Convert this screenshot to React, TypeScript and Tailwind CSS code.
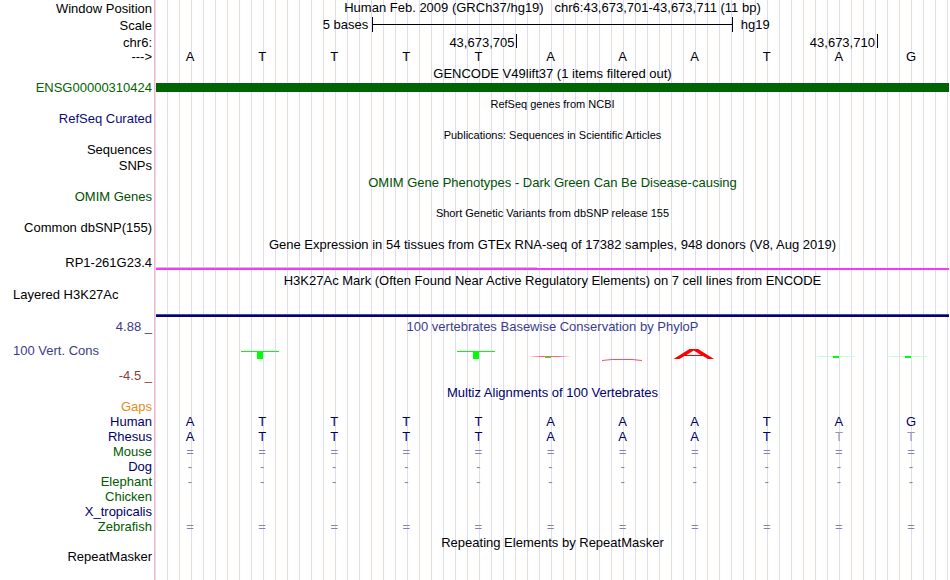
import type { ReactNode } from "react";
import clsx from "clsx";

const SEQUENCE = "ATTTTAAATAG";

const SPECIES = [
  { name: "Human", color: "text-[#000066]", bases: SEQUENCE },
  { name: "Rhesus", color: "text-[#000066]", bases: "ATTTTAAATtt" },
  { name: "Mouse", color: "text-[#005a00]", bases: "===========" },
  { name: "Dog", color: "text-[#000066]", bases: "-----------" },
  { name: "Elephant", color: "text-[#005a00]", bases: "-----------" },
  { name: "Chicken", color: "text-[#005a00]", bases: "" },
  { name: "X_tropicalis", color: "text-[#000066]", bases: "" },
  { name: "Zebrafish", color: "text-[#005a00]", bases: "===========" },
];

type RowProps = {
  label?: ReactNode;
  labelClass?: string;
  height?: string;
  children?: ReactNode;
};

function Row({ label, labelClass, height = "h-[15px]", children }: RowProps) {
  return (
    <div className={clsx("flex", height)}>
      <div className={clsx("w-[154px] shrink-0 pr-0.5 text-right", labelClass)}>{label}</div>
      <div className="min-w-0 flex-1">{children}</div>
    </div>
  );
}

type TitleProps = {
  children: string;
  className?: string;
  small?: boolean;
  height?: string;
  top?: string;
};

function Title({ children, className, small, height = "h-4", top = "pt-0.5" }: TitleProps) {
  return (
    <Row height={height}>
      <h2 className={clsx("pl-0.5 text-center whitespace-pre", top, small && "text-[11px]", className)}>{children}</h2>
    </Row>
  );
}

// lower case letters are mismatches and are drawn faded
function Bases({ bases }: { bases: string }) {
  return (
    <div className="mr-0.5 grid grid-cols-11 text-center">
      {bases.split("").map((base, i) => (
        <span key={i} className={clsx(base === "t" && "text-[#9696be]", /[=-]/.test(base) && "text-[#8282b4]")}>
          {base.toUpperCase()}
        </span>
      ))}
    </div>
  );
}

function PhyloP() {
  return (
    <svg className="block h-[51px] w-full pl-0.5" viewBox="156 334 793 51" preserveAspectRatio="none" aria-hidden="true">
      <defs>
        <linearGradient id="fade">
          <stop offset="0" stopColor="#ff6464" stopOpacity="0.1" />
          <stop offset="0.3" stopColor="#ff6464" />
          <stop offset="0.7" stopColor="#ff6464" />
          <stop offset="1" stopColor="#ff6464" stopOpacity="0.1" />
        </linearGradient>
      </defs>
      <rect x="817" y="356" width="38" height="1" fill="#c8ffc8" />
      <rect x="889" y="356" width="38" height="1" fill="#c8ffc8" />
      <rect x="529" y="356" width="41" height="1" fill="url(#fade)" />
      <g fill="#00ff00">
        <rect x="241" y="351" width="38" height="1" />
        <rect x="257" y="351" width="6" height="8" />
        <rect x="457" y="351" width="38" height="1" />
        <rect x="473" y="351" width="6" height="8" />
        <rect x="545" y="357" width="6" height="1" />
        <rect x="833" y="356" width="6" height="2" />
        <rect x="905" y="356" width="6" height="2" />
      </g>
      <path d="M602 360.5L612 359.5H632L642 360.5" fill="none" stroke="#ff5050" strokeWidth="1" />
      <path
        fill="#ff0000"
        fillRule="evenodd"
        d="M673.5 359L689.5 349H698L714 359H708L703 356H684.5L679.500 359ZM686.500 355H701L693.700 350.500Z"
      />
    </svg>
  );
}

export default function App() {
  return (
    <main className="min-h-screen overflow-hidden bg-white bg-[linear-gradient(to_right,white_154px,#ffb4b4_154px,#ffb4b4_155px,transparent_155px),repeating-linear-gradient(to_right,transparent_0px,transparent_11px,#dcdcff_11px,#dcdcff_12px)] pr-px font-['Liberation_Sans',Arial,sans-serif] text-[13px] leading-[15px] text-black">
      <Row label="Window Position" height="h-[17px]" labelClass="pt-px">
        <h1 className="pl-0.5 text-center whitespace-pre">
          {"Human Feb. 2009 (GRCh37/hg19)   chr6:43,673,701-43,673,711 (11 bp)"}
        </h1>
      </Row>
      <Row label="Scale" height="h-[17px]" labelClass="pt-px">
        <div className="ml-0.5 grid grid-cols-11">
          <span className="col-span-3 pr-1 text-right">5 bases</span>
          <span className="col-span-5 flex items-center border-x border-black">
            <span className="h-px w-full bg-black" />
          </span>
          <span className="col-span-3 pl-2">hg19</span>
        </div>
      </Row>
      <Row label="chr6:" labelClass="pt-px">
        <div className="ml-0.5 grid h-3.5 grid-cols-11 text-right">
          <span className="col-span-5 h-3.5 pt-px pr-0.5">43,673,705</span>
          <span className="col-span-5 h-3.5 border-l border-black pt-px pr-0.5">43,673,710</span>
          <span className="h-3.5 border-l border-black" />
        </div>
      </Row>
      <Row label="--->">
        <Bases bases={SEQUENCE} />
      </Row>

      <Title>GENCODE V49lift37 (1 items filtered out)</Title>
      <Row label="ENSG00000310424" labelClass="text-[#006400]">
        <div className="pt-[3px] pl-0.5">
          <div className="h-[9px] bg-[#006400]" />
        </div>
      </Row>

      <Title small>RefSeq genes from NCBI</Title>
      <Row label="RefSeq Curated" labelClass="text-[#0c0c78]" />

      <Title small>Publications: Sequences in Scientific Articles</Title>
      <Row label="Sequences" height="h-4" />
      <Row label="SNPs" height="h-4" />

      <Title height="h-[15px]" top="pt-px" className="text-[#005000]">OMIM Gene Phenotypes - Dark Green Can Be Disease-causing</Title>
      <Row label="OMIM Genes" labelClass="text-[#005000]" />

      <Title small>Short Genetic Variants from dbSNP release 155</Title>
      <Row label="Common dbSNP(155)" />

      <Title height="h-[17px]">Gene Expression in 54 tissues from GTEx RNA-seq of 17382 samples, 948 donors (V8, Aug 2019)</Title>
      <Row label="RP1-261G23.4" height="h-5" labelClass="pt-[3px]">
        <div className="pt-[15px] pl-0.5">
          <div className="h-px w-[48%] bg-[#c8c8c8]" />
          <div className="h-0.5 bg-[#ff33ff]" />
        </div>
      </Row>

      <Title height="h-[15px]" top="pt-px">H3K27Ac Mark (Often Found Near Active Regulatory Elements) on 7 cell lines from ENCODE</Title>
      <Row label={<div className="pl-[13px] text-left">Layered H3K27Ac</div>} height="h-8">
        <div className="pt-[27px] pl-0.5">
          <div className="h-[3px] border-t border-[#2850dc] bg-[#140050]" />
        </div>
      </Row>

      <Row label="4.88 _" labelClass="text-[#3c3c8c]">
        <h2 className="pl-0.5 text-center text-[#3c3c8c]">100 vertebrates Basewise Conservation by PhyloP</h2>
      </Row>
      <Row
        height="h-[51px]"
        labelClass="flex flex-col justify-between pt-[9px] pb-0.5"
        label={
          <>
            <div className="pl-[13px] text-left text-[#3c3c8c]">100 Vert. Cons</div>
            <div className="text-[#8c3c3c]">-4.5 _</div>
          </>
        }
      >
        <PhyloP />
      </Row>

      <Title height="h-3.5" top="pt-0" className="text-[#000066]">Multiz Alignments of 100 Vertebrates</Title>
      <Row label="Gaps" labelClass="text-[#e68c14]" />
      {SPECIES.map(({ name, color, bases }) => (
        <Row key={name} label={name} labelClass={color}>
          <div className="text-[#000066]">
            <Bases bases={bases} />
          </div>
        </Row>
      ))}

      <Title height="h-[15px]" top="pt-px">Repeating Elements by RepeatMasker</Title>
      <Row label="RepeatMasker" />
    </main>
  );
}
